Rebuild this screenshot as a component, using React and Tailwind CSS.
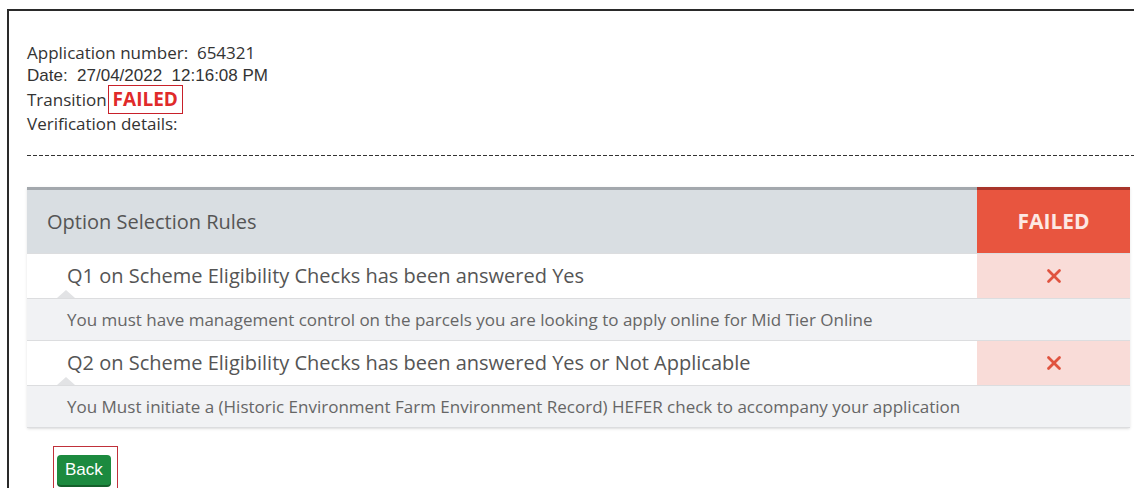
import { X } from 'lucide-react';

const RULES = [
  {
    question: 'Q1 on Scheme Eligibility Checks has been answered Yes',
    detail: 'You must have management control on the parcels you are looking to apply online for Mid Tier Online',
  },
  {
    question: 'Q2 on Scheme Eligibility Checks has been answered Yes or Not Applicable',
    detail: 'You Must initiate a (Historic Environment Farm Environment Record) HEFER check to accompany your application',
  },
];

function RuleRows({ rule }) {
  return (
    <>
      <div className="relative flex h-[45px] border-t border-[#dcdddf] bg-white">
        <div className="flex flex-1 items-center pl-[40px] text-[20px] text-[#555]">{rule.question}</div>
        <div className="flex w-[153px] items-center justify-center bg-[#f9dcd8]">
          <X className="h-[22px] w-[22px] text-[#e0533f]" strokeWidth={3} />
        </div>
        {/* pointer into the detail row */}
        <span className="absolute bottom-0 left-[30px] h-0 w-0 border-x-[9px] border-b-[8px] border-x-transparent border-b-[#e2e3e5]" />
      </div>
      <div className="flex h-[42px] items-center border-t border-[#dcdddf] bg-[#f1f2f4] pl-[40px] text-[17px] text-[#666]">
        {rule.detail}
      </div>
    </>
  );
}

export default function App() {
  return (
    <div className="h-[488px] overflow-hidden bg-white pl-[7px] pt-[9px]" style={{ fontFamily: '"Open Sans", sans-serif' }}>
      <div className="h-[600px] border-l-2 border-t-2 border-[#2a2a2a] pl-[18px] pt-[30px]">
        <div className="text-[17px] leading-[23px] text-[#333]">
          <div className="whitespace-pre">Application number:  654321</div>
          <div className="whitespace-pre font-['Liberation_Sans',sans-serif]">Date:  27/04/2022  12:16:08 PM</div>
          <div className="flex h-[25px] items-center">
            <span>Transition</span>
            <span className="ml-[1px] border border-[#c8202a] px-[4px] text-[19px] font-bold leading-[27px] text-[#e02a2a]">FAILED</span>
          </div>
          <div>Verification details:</div>
        </div>

        <div className="mt-[20px] h-px bg-[repeating-linear-gradient(90deg,#333_0_4px,transparent_4px_6px)]" />

        <div className="mt-[31px] w-[1103px] border-b border-[#dcdddf] shadow-sm">
          <div className="flex h-[66px]">
            <div className="flex flex-1 items-center border-t-[3px] border-[#a3a8ad] bg-[#d9dee2] pl-[20px] text-[20px] text-[#555]">
              Option Selection Rules
            </div>
            <div className="flex w-[153px] items-center justify-center border-t-[3px] border-[#a8342a] bg-[#e8553f] text-[21px] font-bold text-[#fde8e4]">
              FAILED
            </div>
          </div>
          {RULES.map((rule) => (
            <RuleRows key={rule.question} rule={rule} />
          ))}
        </div>

        <div className="mt-[18px] ml-[26px] inline-block border border-[#c0303a] pl-[3px] pr-[6px] pt-[8px] pb-[6px]">
          <button className="rounded-[4px] bg-[#1c8a3f] px-[8px] py-[4px] text-[17px] leading-[22px] text-white shadow-[0_2px_0_#14602b] font-['Liberation_Sans',sans-serif]">
            Back
          </button>
        </div>
      </div>
    </div>
  );
}
